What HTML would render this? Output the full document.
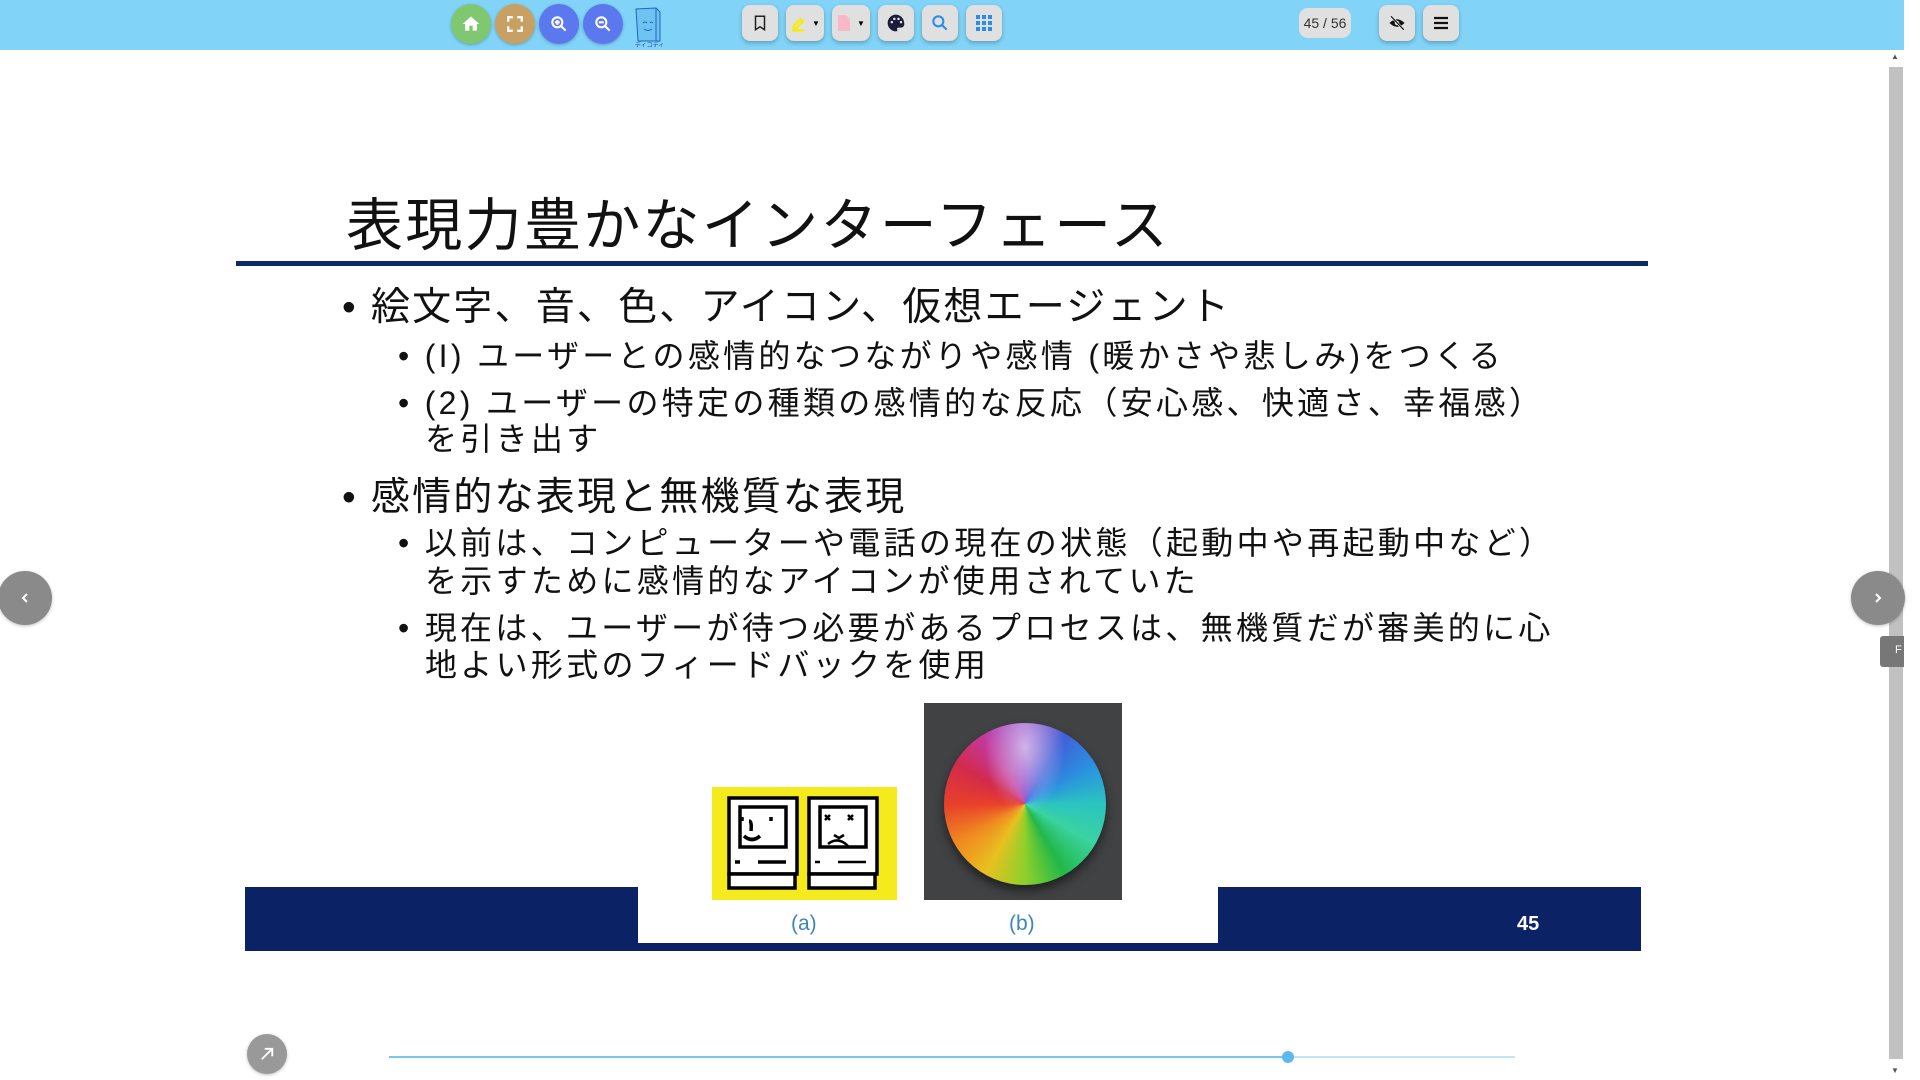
<!DOCTYPE html>
<html><head><meta charset="utf-8"><style>
*{margin:0;padding:0;box-sizing:border-box}
body{width:1920px;height:1080px;overflow:hidden;background:#fff;position:relative;font-family:"Liberation Sans","Noto Sans CJK JP",sans-serif}
.abs{position:absolute}
#tb{left:0;top:0;width:1904px;height:50px;background:#81d4f8}
.c{position:absolute;top:4px;width:40px;height:40px;border-radius:50%;display:flex;align-items:center;justify-content:center;box-shadow:0 1px 3px rgba(0,0,0,.25)}
.b{position:absolute;top:5px;width:36px;height:36px;border-radius:8px;background:#e0e0e0;display:flex;align-items:center;justify-content:center;box-shadow:0 2px 4px rgba(0,0,0,.25)}
.jp{font-family:"Liberation Sans","Noto Sans CJK JP",sans-serif;color:#111;white-space:nowrap}
.li{position:absolute;white-space:nowrap}
.s{font-size:32px;letter-spacing:3.3px}
</style></head><body>
<div id="tb" class="abs"></div>
<div class="c" style="left:451px;background:#80c870"><svg width="20" height="20" viewBox="0 0 24 24"><path d="M10 20v-6h4v6h5v-8h3L12 3 2 12h3v8z" fill="#fff"/></svg></div>
<div class="c" style="left:495px;background:#c9a063"><svg width="18" height="18" viewBox="0 0 24 24"><path d="M3 9V3h6M15 3h6v6M21 15v6h-6M9 21H3v-6" stroke="#fff" stroke-width="3" fill="none"/></svg></div>
<div class="c" style="left:539px;background:#5b78ee"><svg width="20" height="20" viewBox="0 0 24 24"><circle cx="10" cy="10" r="6" stroke="#fff" stroke-width="2.5" fill="none"/><path d="M14.5 14.5L20 20M7 10h6M10 7v6" stroke="#fff" stroke-width="2.5"/></svg></div>
<div class="c" style="left:583px;background:#5b78ee"><svg width="20" height="20" viewBox="0 0 24 24"><circle cx="10" cy="10" r="6" stroke="#fff" stroke-width="2.5" fill="none"/><path d="M14.5 14.5L20 20M7 10h6" stroke="#fff" stroke-width="2.5"/></svg></div>
<div class="abs" style="left:633px;top:5px;width:30px;height:42px"><svg width="30" height="42" viewBox="0 0 30 42"><path d="M3 4l20-1 4 4v29H5z" fill="#6fc3f0" stroke="#2266bb"/><path d="M23 3v33" stroke="#2266bb"/><path d="M10 18q2-2 4 0M17 18q1-2 3 0M11 24q4 3 8 0" stroke="#2266bb" fill="none"/><text x="2" y="42" font-size="6" fill="#2244aa" font-family="Noto Sans CJK JP">ディコディコ</text></svg></div>

<div class="b" style="left:742px"><svg width="18" height="20" viewBox="0 0 24 24"><path d="M6 3h12v18l-6-4-6 4z" stroke="#222" stroke-width="2" fill="none"/></svg></div>
<div class="b" style="left:786px;width:38px"><svg width="18" height="18" viewBox="0 0 24 24"><path d="M5 16l9-9 3 3-9 9H5zM3 22h16" stroke="#f5ee00" stroke-width="3" fill="none"/></svg><span style="font-size:8px;margin-left:4px">▼</span></div>
<div class="b" style="left:832px;width:38px"><svg width="14" height="18" viewBox="0 0 14 18"><path d="M1 1h8l4 4v12H1z" fill="#f9b8c8"/></svg><span style="font-size:8px;margin-left:6px">▼</span></div>
<div class="b" style="left:878px"><svg width="20" height="20" viewBox="0 0 24 24"><path d="M12 2a10 10 0 000 20c1.5 0 2-1 1.5-2-.6-1.2 0-2.5 1.5-2.5H18a4 4 0 004-4C22 7 17.5 2 12 2z" fill="#1c1c3a"/><circle cx="7" cy="11" r="1.5" fill="#e0e0e0"/><circle cx="10" cy="7" r="1.5" fill="#e0e0e0"/><circle cx="15" cy="7" r="1.5" fill="#e0e0e0"/><circle cx="18" cy="11" r="1.5" fill="#e0e0e0"/></svg></div>
<div class="b" style="left:922px"><svg width="20" height="20" viewBox="0 0 24 24"><circle cx="10" cy="10" r="6" stroke="#2a8de8" stroke-width="2.5" fill="none"/><path d="M14.5 14.5L20 20" stroke="#2a8de8" stroke-width="2.5"/></svg></div>
<div class="b" style="left:966px"><svg width="18" height="18" viewBox="0 0 18 18" fill="#2a8de8"><rect x="1" y="1" width="4" height="4"/><rect x="7" y="1" width="4" height="4"/><rect x="13" y="1" width="4" height="4"/><rect x="1" y="7" width="4" height="4"/><rect x="7" y="7" width="4" height="4"/><rect x="13" y="7" width="4" height="4"/><rect x="1" y="13" width="4" height="4"/><rect x="7" y="13" width="4" height="4"/><rect x="13" y="13" width="4" height="4"/></svg></div>

<div class="abs" style="left:1299px;top:8px;width:52px;height:30px;border-radius:9px;background:#e0e0e0;font-size:14px;color:#333;display:flex;align-items:center;justify-content:center">45 / 56</div>
<div class="b" style="left:1379px;width:36px"><svg width="20" height="18" viewBox="0 0 24 24"><path d="M2 12q10-10 20 0-10 10-20 0z" fill="#111"/><circle cx="12" cy="12" r="3" fill="#e0e0e0"/><path d="M4 3l17 18" stroke="#e0e0e0" stroke-width="3"/><path d="M4 3l17 18" stroke="#111" stroke-width="1.5"/></svg></div>
<div class="b" style="left:1423px;width:36px"><svg width="18" height="16" viewBox="0 0 18 16"><path d="M2 3h14M2 8h14M2 13h14" stroke="#111" stroke-width="2.2"/></svg></div>

<div class="abs" style="left:1904px;top:0;width:16px;height:1080px;background:#fff"></div>
<div class="abs" style="left:1888px;top:50px;width:16px;height:1030px;background:#fff"></div>
<div class="abs" style="left:1889px;top:67px;width:14px;height:992px;background:#c1c1c1"></div>
<div class="abs" style="left:1891px;top:52px;font-size:8px;color:#555">▲</div>
<div class="abs" style="left:1891px;top:1066px;font-size:8px;color:#555">▼</div>

<div class="abs jp" style="left:346px;top:191px;font-size:57px;letter-spacing:2.3px;line-height:70px">表現力豊かなインターフェース</div>
<div class="abs" style="left:236px;top:261px;width:1412px;height:5px;background:#0d2a66"></div>

<div class="li jp" style="left:342px;top:276px;font-size:39px;letter-spacing:2.2px">• 絵文字、音、色、アイコン、仮想エージェント</div>
<div class="li jp s" style="left:398px;top:331px">• (I) ユーザーとの感情的なつながりや感情 (暖かさや悲しみ)をつくる</div>
<div class="li jp s" style="left:398px;top:378px">• (2) ユーザーの特定の種類の感情的な反応（安心感、快適さ、幸福感）</div>
<div class="li jp s" style="left:425px;top:414px">を引き出す</div>
<div class="li jp" style="left:342px;top:466px;font-size:39px;letter-spacing:2.2px">• 感情的な表現と無機質な表現</div>
<div class="li jp s" style="left:398px;top:518px">• 以前は、コンピューターや電話の現在の状態（起動中や再起動中など）</div>
<div class="li jp s" style="left:425px;top:556px">を示すために感情的なアイコンが使用されていた</div>
<div class="li jp s" style="left:398px;top:603px">• 現在は、ユーザーが待つ必要があるプロセスは、無機質だが審美的に心</div>
<div class="li jp s" style="left:425px;top:640px">地よい形式のフィードバックを使用</div>

<div class="abs" style="left:245px;top:887px;width:1396px;height:64px;background:#0b2265"></div>
<div class="abs" style="left:638px;top:887px;width:580px;height:56px;background:#fff"></div>
<div class="abs" style="left:1517px;top:913px;font-size:20px;font-weight:bold;color:#fff">45</div>

<div class="abs" style="left:712px;top:787px;width:185px;height:113px;background:#f5eb1c">
<svg width="185" height="113" viewBox="0 0 185 113" fill="none" stroke="#000" stroke-width="3.5">
<rect x="17" y="11" width="68" height="76" fill="#fff"/><rect x="28" y="20" width="46" height="40"/><rect x="17" y="87" width="66" height="14" fill="#fff"/><path d="M23 75h5M46 75h28M37 34q3 0 2 10M32 49q8 7 16 0"/><path d="M30 30v4M59 30v4"/>
<rect x="97" y="11" width="68" height="76" fill="#fff"/><rect x="108" y="20" width="46" height="40"/><rect x="97" y="87" width="66" height="14" fill="#fff"/><path d="M103 75h5M126 75h28M113 28l5 5M118 28l-5 5M136 28l5 5M141 28l-5 5M122 48l5 3 5-3M116 57q10-8 20 2" stroke-width="2.5"/>
</svg></div>
<div class="abs" style="left:924px;top:703px;width:198px;height:197px;background:#404244">
<div style="position:absolute;left:20px;top:20px;width:162px;height:162px;border-radius:50%;background:conic-gradient(from 90deg,#2bc4c0,#3bd3a0,#22b84a,#8fd02a,#e8c020,#f08a20,#e8402a,#d42a4a,#c03aa0,#8a40c8,#4060d8,#2a90e0,#2bc4c0);box-shadow:0 6px 10px rgba(0,0,0,.5)"></div>
<div style="position:absolute;left:20px;top:20px;width:162px;height:162px;border-radius:50%;background:radial-gradient(ellipse at 50% 15%,rgba(255,255,255,.6),rgba(255,255,255,0) 35%)"></div>
</div>
<div class="abs" style="left:791px;top:912px;font-size:21px;color:#3e86b8">(a)</div>
<div class="abs" style="left:1009px;top:912px;font-size:21px;color:#3e86b8">(b)</div>

<div class="c" style="left:-2px;top:571px;width:54px;height:54px;background:#8a8a8a"><svg width="14" height="14" viewBox="0 0 14 14"><path d="M9 3L5 7l4 4" stroke="#fff" stroke-width="2" fill="none"/></svg></div>
<div class="c" style="left:1851px;top:571px;width:54px;height:54px;background:#8a8a8a"><svg width="14" height="14" viewBox="0 0 14 14"><path d="M5 3l4 4-4 4" stroke="#fff" stroke-width="2" fill="none"/></svg></div>
<div class="abs" style="left:1880px;top:636px;width:24px;height:31px;background:#777;border-radius:3px 0 0 3px;color:#fff;font-size:11px;padding:8px 0 0 15px">F</div>
<div class="c" style="left:247px;top:1034px;width:40px;height:40px;background:#999"><svg width="18" height="18" viewBox="0 0 24 24"><path d="M5 19L19 5M9 5h10v10" stroke="#fff" stroke-width="2.5" fill="none"/></svg></div>
<div class="abs" style="left:389px;top:1056px;width:1126px;height:2px;background:#bfe6f8"></div>
<div class="abs" style="left:389px;top:1056px;width:899px;height:2px;background:#78c8ee"></div>
<div class="abs" style="left:1282px;top:1051px;width:12px;height:12px;border-radius:50%;background:#5cb8ee"></div>
</body></html>
